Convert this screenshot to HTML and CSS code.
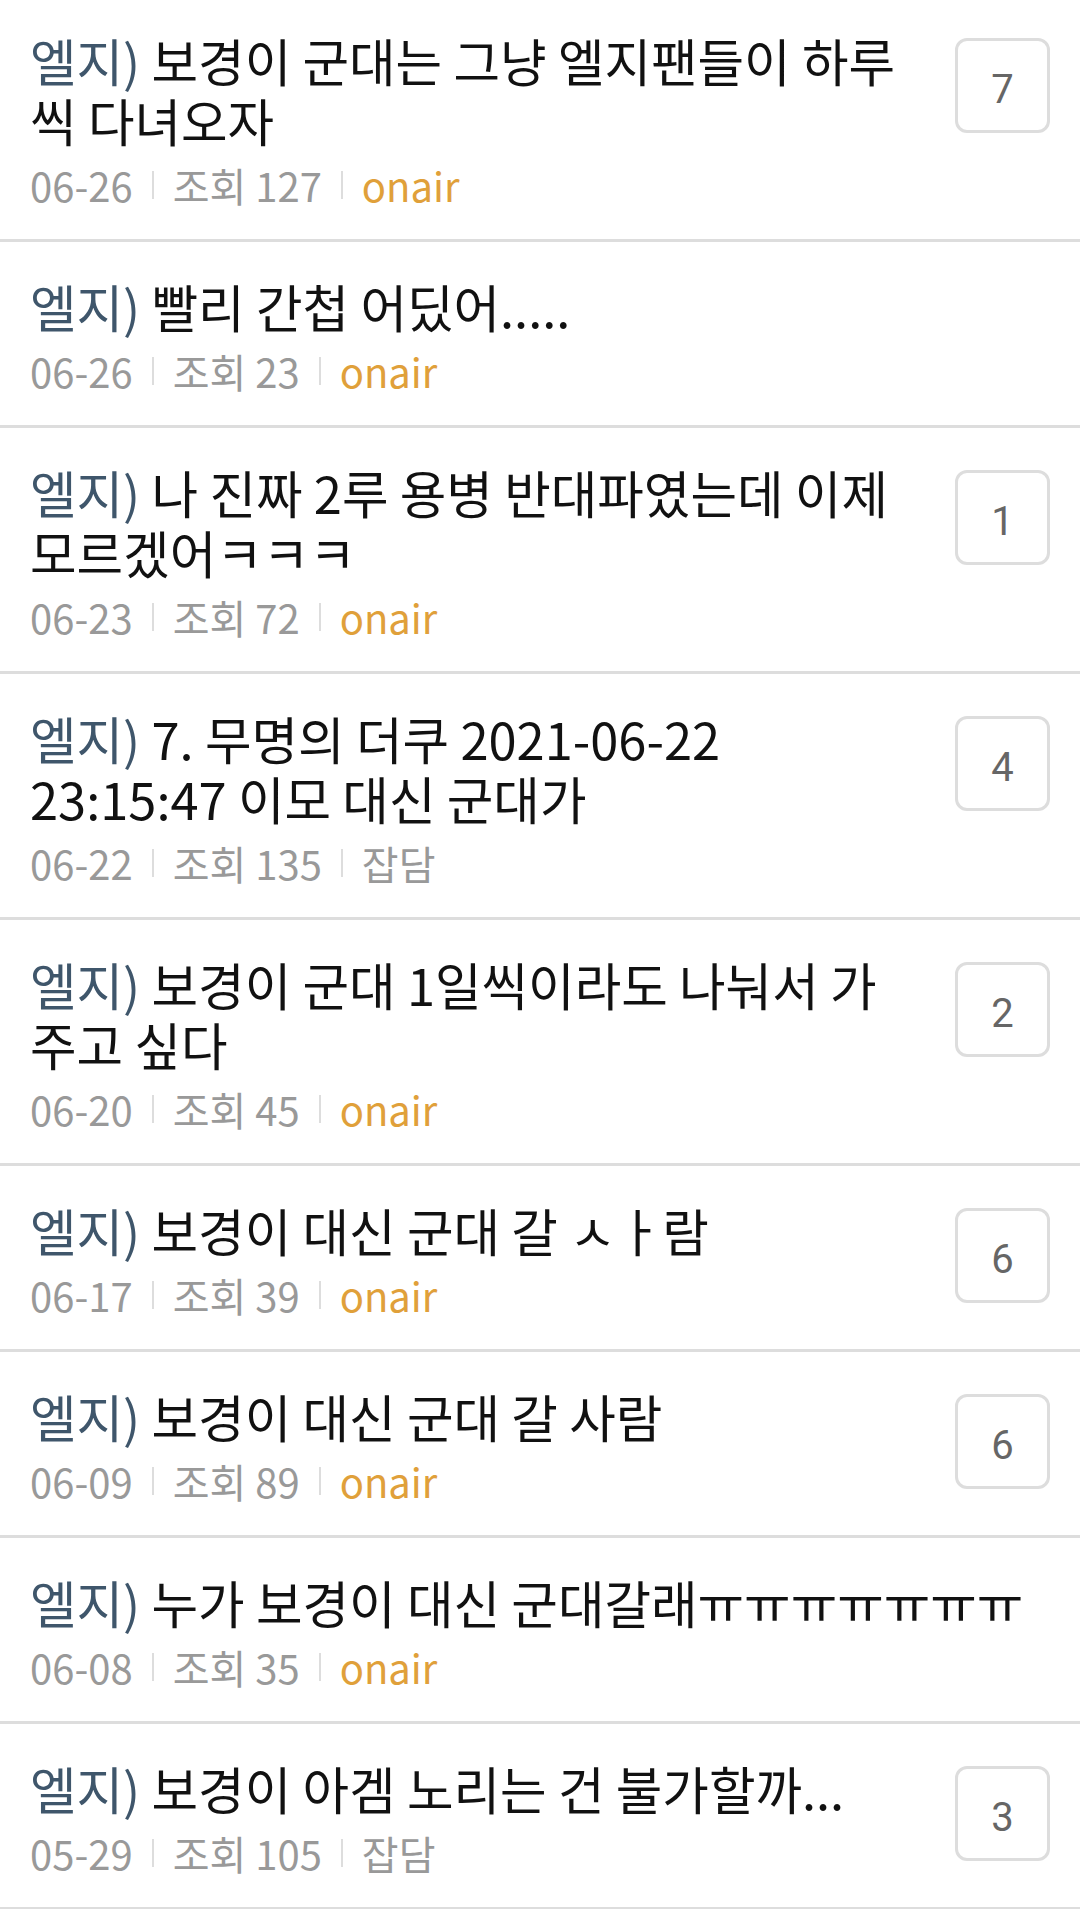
FILE: index.html
```html
<!DOCTYPE html>
<html>
<head lang="ko">
    <meta charset="UTF-8">
    <title>엘지 게시판</title>
    <link rel="stylesheet" href="styles.css">
</head>
<body>
<ul id="list">
    <li class="item">
        <div class="info">
            <p class="title"><span class="cate">엘지)</span> 보경이 군대는 그냥 엘지팬들이 하루씩 다녀오자</p>
            <p class="meta"><span>06-26</span><i></i><span>조회 127</span><i></i><span class="board">onair</span></p>
        </div>
        <span class="cmt">7</span>
    </li>
    <li class="item">
        <div class="info">
            <p class="title"><span class="cate">엘지)</span> 빨리 간첩 어딨어.....</p>
            <p class="meta"><span>06-26</span><i></i><span>조회 23</span><i></i><span class="board">onair</span></p>
        </div>
    </li>
    <li class="item">
        <div class="info">
            <p class="title"><span class="cate">엘지)</span> 나 진짜 2루 용병 반대파였는데 이제 모르겠어ㅋㅋㅋ</p>
            <p class="meta"><span>06-23</span><i></i><span>조회 72</span><i></i><span class="board">onair</span></p>
        </div>
        <span class="cmt">1</span>
    </li>
    <li class="item">
        <div class="info">
            <p class="title"><span class="cate">엘지)</span> 7. 무명의 더쿠 2021-06-22 23:15:47 이모 대신 군대가</p>
            <p class="meta"><span>06-22</span><i></i><span>조회 135</span><i></i><span>잡담</span></p>
        </div>
        <span class="cmt">4</span>
    </li>
    <li class="item">
        <div class="info">
            <p class="title"><span class="cate">엘지)</span> 보경이 군대 1일씩이라도 나눠서 가주고 싶다</p>
            <p class="meta"><span>06-20</span><i></i><span>조회 45</span><i></i><span class="board">onair</span></p>
        </div>
        <span class="cmt">2</span>
    </li>
    <li class="item">
        <div class="info">
            <p class="title"><span class="cate">엘지)</span> 보경이 대신 군대 갈 ㅅㅏ람</p>
            <p class="meta"><span>06-17</span><i></i><span>조회 39</span><i></i><span class="board">onair</span></p>
        </div>
        <span class="cmt">6</span>
    </li>
    <li class="item">
        <div class="info">
            <p class="title"><span class="cate">엘지)</span> 보경이 대신 군대 갈 사람</p>
            <p class="meta"><span>06-09</span><i></i><span>조회 89</span><i></i><span class="board">onair</span></p>
        </div>
        <span class="cmt">6</span>
    </li>
    <li class="item">
        <div class="info">
            <p class="title"><span class="cate">엘지)</span> 누가 보경이 대신 군대갈래ㅠㅠㅠㅠㅠㅠㅠ</p>
            <p class="meta"><span>06-08</span><i></i><span>조회 35</span><i></i><span class="board">onair</span></p>
        </div>
    </li>
    <li class="item">
        <div class="info">
            <p class="title"><span class="cate">엘지)</span> 보경이 아겜 노리는 건 불가할까...</p>
            <p class="meta"><span>05-29</span><i></i><span>조회 105</span><i></i><span>잡담</span></p>
        </div>
        <span class="cmt">3</span>
    </li>
</ul>
</body>
</html>
```

FILE: styles.css
```css
*{
    margin: 0;
    padding: 0;
}
html,body{
    background: #fff;
}
body{
    font-family: "Noto Sans CJK KR", "Noto Sans", sans-serif;
    overflow: hidden;
}
ul{
    list-style: none;
}
#list{
    margin-top: -4px;
}
.item{
    display: flex;
    align-items: flex-start;
    padding: 34px 30px 31px;
    border-bottom: 3px solid #dddddd;
}
.info{
    flex: 1;
    min-width: 0;
}
.title{
    font-size: 50.6px;
    line-height: 60px;
    color: #111111;
    padding-right: 10px;
}
.title .cate{
    color: #3f566b;
}
.meta{
    display: flex;
    align-items: center;
    margin-top: 12px;
    font-size: 40px;
    line-height: 46px;
    color: #999999;
}
.meta i{
    width: 2px;
    height: 28px;
    background: #dddddd;
    margin: 0 19px;
}
.meta .board{
    color: #e0a03a;
}
.cmt{
    flex: none;
    box-sizing: border-box;
    width: 95px;
    height: 95px;
    margin-top: 8px;
    margin-left: 30px;
    padding-top: 8px;
    border: 3px solid #dddddd;
    border-radius: 12px;
    font-family: Roboto, "Liberation Sans", sans-serif;
    font-size: 40px;
    line-height: 81px;
    text-align: center;
    color: #666666;
}
```
